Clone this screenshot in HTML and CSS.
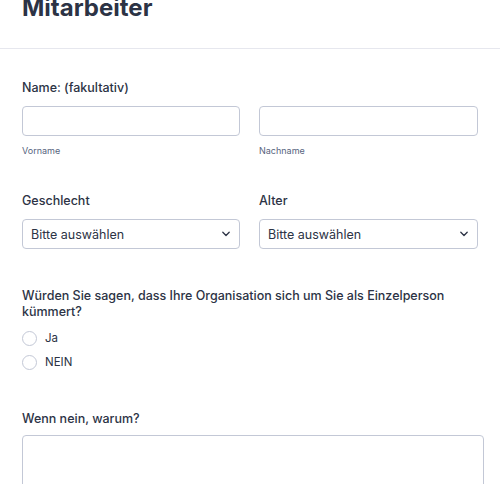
FILE: index.html
```html
<!DOCTYPE html>
<html lang="de">
<head>
  <meta charset="UTF-8">
  <title>Mitarbeiter</title>
  <meta name="viewport" content="width=device-width, initial-scale=1.0">
  <link rel="stylesheet" href="styles.css">
</head>
<body>
  <div class="header">
    <h1>Mitarbeiter</h1>
  </div>

  <div class="form">
    <div class="field first">
      <label class="label">Name: (fakultativ)</label>
      <div class="row">
        <div>
          <input type="text" class="input">
          <div class="sublabel">Vorname</div>
        </div>
        <div>
          <input type="text" class="input">
          <div class="sublabel">Nachname</div>
        </div>
      </div>
    </div>

    <div class="row field">
      <div>
        <label class="label">Geschlecht</label>
        <div class="select">
          <span>Bitte auswählen</span>
          <svg width="10" height="6" viewBox="0 0 10 6"><path d="M1.8 1.3 5 4.5 8.2 1.3" fill="none" stroke="#2c3345" stroke-width="1.3" stroke-linecap="round" stroke-linejoin="round"/></svg>
        </div>
      </div>
      <div>
        <label class="label">Alter</label>
        <div class="select">
          <span>Bitte auswählen</span>
          <svg width="10" height="6" viewBox="0 0 10 6"><path d="M1.8 1.3 5 4.5 8.2 1.3" fill="none" stroke="#2c3345" stroke-width="1.3" stroke-linecap="round" stroke-linejoin="round"/></svg>
        </div>
      </div>
    </div>

    <div class="field question">
      <label class="label">Würden Sie sagen, dass Ihre Organisation sich um Sie als Einzelperson kümmert?</label>
      <div class="radio"><span class="circle"></span>Ja</div>
      <div class="radio"><span class="circle"></span>NEIN</div>
    </div>

    <div class="field last">
      <label class="label">Wenn nein, warum?</label>
      <textarea class="textarea"></textarea>
    </div>
  </div>
</body>
</html>
```

FILE: styles.css
```css
body {
  margin: 0;
  font-family: Inter, 'Noto Sans', sans-serif;
  color: #2c3345;
  background: #fff;
  overflow: hidden;
}
.header {
  padding: 0 22px 23px;
  border-bottom: 1px solid #e6e7ee;
}
h1 {
  margin: -9px 0 0;
  font-size: 24px;
  line-height: 34px;
  font-weight: 700;
}
.form {
  padding: 0 16px 0 22px;
}
.field {
  margin-top: 36px;
}
.field.first {
  margin-top: 31px;
}
.field.question {
  margin-top: 39px;
}
.field.last {
  margin-top: 37px;
}
.label {
  display: block;
  font-size: 12.5px;
  line-height: 16px;
  font-weight: 500;
  margin-bottom: 10px;
}
.question .label {
  margin-bottom: 6px;
}
.last .label {
  margin-bottom: 8px;
}
.row {
  display: grid;
  grid-template-columns: 218px 219px;
  gap: 19px;
}
.input, .select, .textarea {
  box-sizing: border-box;
  border: 1px solid #c3c8d6;
  border-radius: 4px;
  background: #fff;
}
.input {
  display: block;
  width: 100%;
  height: 30px;
  margin: 0;
}
.sublabel {
  margin-top: 9px;
  font-size: 9px;
  line-height: 12px;
  color: #57647e;
}
.select {
  height: 30px;
  display: flex;
  align-items: center;
  justify-content: space-between;
  padding: 0 8px;
  font-size: 12.5px;
}
.radio {
  display: flex;
  align-items: center;
  height: 24px;
  font-size: 11.5px;
}
.circle {
  box-sizing: border-box;
  width: 15px;
  height: 15px;
  border: 1px solid #c3c8d6;
  border-radius: 50%;
  margin-right: 8px;
}
.textarea {
  display: block;
  width: 462px;
  height: 80px;
  margin: 0;
  resize: none;
}
```
